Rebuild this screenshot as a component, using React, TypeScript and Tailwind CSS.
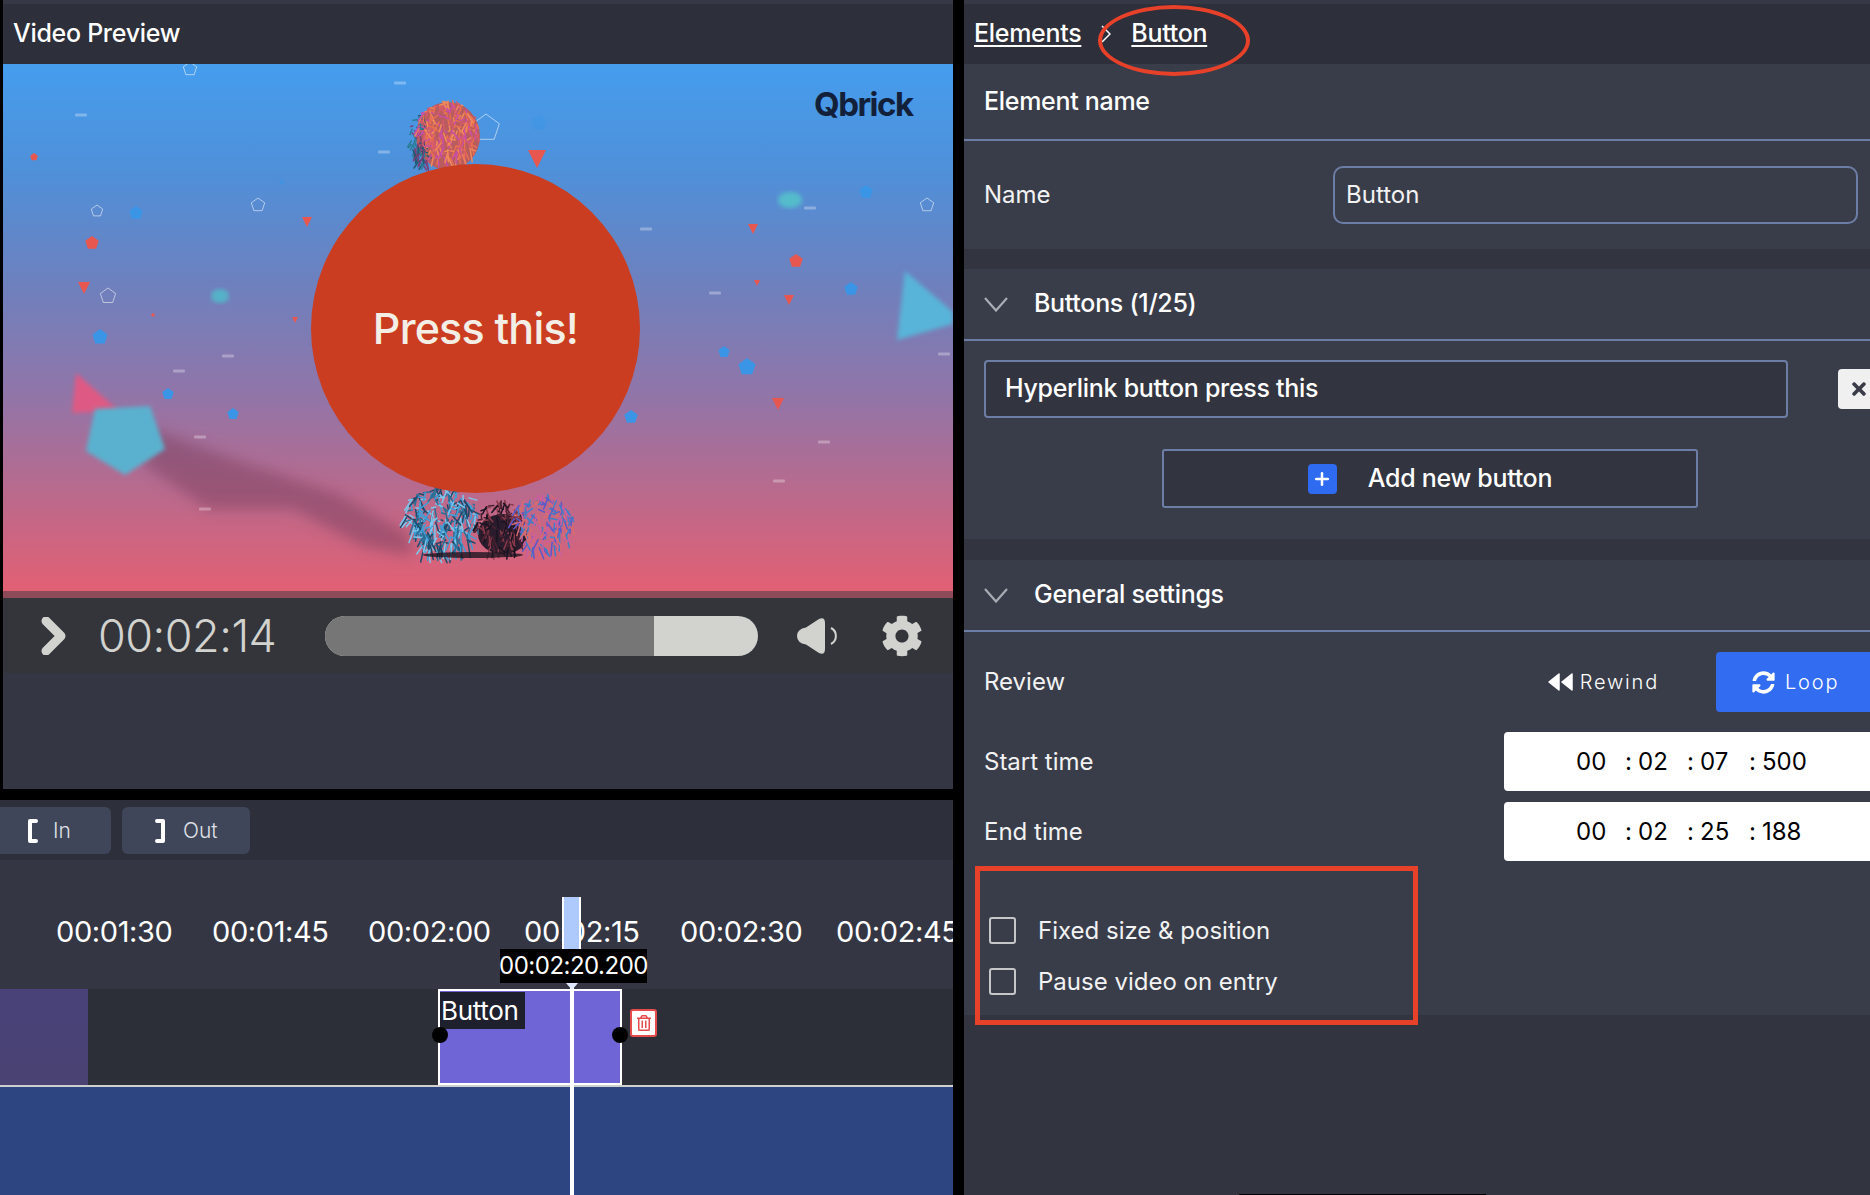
import { FaCog, FaSyncAlt, FaTimes, FaRegTrashAlt } from "react-icons/fa";
import { Plus } from "lucide-react";

const seeded = (n: number) => {
  const x = Math.sin(n * 12.9898) * 43758.5453;
  return x - Math.floor(x);
};

// hair strokes for the creature in the video frame
const Fur = ({ cx, cy, rx, ry, count, colors, len, seed }: { cx: number; cy: number; rx: number; ry: number; count: number; colors: string[]; len: number; seed: number }) => (
  <g fill="none" strokeWidth="1.5" strokeLinecap="round">
    {Array.from({ length: count }).map((_, i) => {
      const a = seeded(seed + i) * Math.PI * 2;
      const r = Math.sqrt(seeded(seed + i + 500));
      const x = cx + Math.cos(a) * r * rx;
      const y = cy + Math.sin(a) * r * ry;
      const dx = (seeded(seed + i + 900) - 0.5) * len;
      const dy = seeded(seed + i + 1300) * len;
      return <path key={i} d={`M${x.toFixed(1)} ${y.toFixed(1)}q${(dx / 2).toFixed(1)} ${(dy / 2).toFixed(1)} ${dx.toFixed(1)} ${dy.toFixed(1)}`} stroke={colors[i % colors.length]} />;
    })}
  </g>
);

const reds: number[][] = [[31, 93, 4], [534, 95, 9], [304, 158, 5], [89, 179, 7], [81, 224, 6], [750, 165, 5], [793, 197, 7], [754, 219, 3], [786, 236, 5], [150, 251, 2], [292, 256, 3], [775, 340, 6]];
const blues: number[][] = [[133, 149, 7], [97, 273, 8], [165, 330, 6], [230, 350, 6], [628, 353, 7], [721, 288, 6], [744, 303, 9], [848, 225, 7], [863, 128, 7], [279, 118, 3], [536, 59, 8]];
const dashes: number[][] = [[397, 19], [78, 51], [381, 88], [643, 165], [712, 229], [225, 292], [807, 144], [941, 290], [197, 373], [202, 445], [176, 307], [821, 378], [776, 417]];
const outlines: number[][] = [[483, 64, 14], [187, 5, 7], [255, 141, 7], [94, 147, 6], [105, 232, 8], [924, 141, 7]];

const pentagon = (x: number, y: number, r: number) =>
  [0, 1, 2, 3, 4].map((i) => {
    const a = -Math.PI / 2 + (i * 2 * Math.PI) / 5;
    return `${(x + Math.cos(a) * r).toFixed(1)},${(y + Math.sin(a) * r).toFixed(1)}`;
  }).join(" ");

const VideoArt = () => (
  <svg viewBox="0 0 950 534" className="absolute inset-0 w-full h-full">
    <defs>
      <linearGradient id="sky" x1="0" y1="0" x2="0" y2="1">
        <stop offset="0" stopColor="#459dee" />
        <stop offset="0.2" stopColor="#4f90d9" />
        <stop offset="0.42" stopColor="#6f80bd" />
        <stop offset="0.62" stopColor="#9175a8" />
        <stop offset="0.8" stopColor="#b96a8d" />
        <stop offset="1" stopColor="#e55f72" />
      </linearGradient>
      <filter id="b2"><feGaussianBlur stdDeviation="2" /></filter>
      <filter id="b7"><feGaussianBlur stdDeviation="7" /></filter>
    </defs>
    <rect width="950" height="534" fill="url(#sky)" />
    <polygon points="150,365 230,395 335,430 405,470 410,492 360,482 290,445 205,445 140,400" fill="#7a3f5f" opacity="0.5" filter="url(#b7)" />
    <polygon points="73,309 116,347 69,349" fill="#de5a84" filter="url(#b2)" />
    <polygon points="92,345 147,342 162,385 122,411 83,387" fill="#5ab1cf" filter="url(#b2)" />
    <polygon points="902,207 950,248 950,260 894,276" fill="#58b4d8" filter="url(#b2)" />
    <ellipse cx="217" cy="232" rx="9" ry="7" fill="#55b2c8" filter="url(#b2)" />
    <ellipse cx="787" cy="136" rx="12" ry="8" fill="#55bccc" filter="url(#b2)" />
    {reds.map(([x, y, r], i) => (
      <polygon key={i} points={i % 3 === 0 ? pentagon(x, y, r) : `${x - r},${y - r} ${x + r},${y - r} ${x},${y + r}`} fill="#e8574f" />
    ))}
    {blues.map(([x, y, r], i) => (
      <polygon key={i} points={pentagon(x, y, r)} fill="#3b95e6" opacity={i === 10 || i === 9 ? 0.5 : 1} />
    ))}
    {outlines.map(([x, y, r], i) => (
      <polygon key={i} points={pentagon(x, y, r)} fill="none" stroke="#ffffff" strokeOpacity="0.55" strokeWidth="1" />
    ))}
    {dashes.map(([x, y], i) => (
      <rect key={i} x={x - 6} y={y - 1.5} width="12" height="3" rx="1" fill="#ffffff" opacity="0.3" />
    ))}
    <ellipse cx="445" cy="72" rx="32" ry="34" fill="#b85c5e" />
    <Fur cx={417} cy={78} rx={9} ry={28} count={80} colors={["#1f5a70", "#2a7d96", "#7b3f78"]} len={10} seed={10} />
    <Fur cx={445} cy={66} rx={30} ry={30} count={260} colors={["#e86f4f", "#d65b6b", "#c94fa6", "#f08a5a"]} len={12} seed={20} />
    <ellipse cx="500" cy="470" rx="25" ry="20" fill="#2a1c2c" />
    <Fur cx={438} cy={455} rx={36} ry={34} count={280} colors={["#3f9fd6", "#2a6f96", "#7cc8ee", "#1d4a6a"]} len={16} seed={40} />
    <Fur cx={498} cy={462} rx={24} ry={26} count={140} colors={["#1a1422", "#4a2232", "#8a3a4a"]} len={12} seed={70} />
    <Fur cx={540} cy={458} rx={30} ry={28} count={180} colors={["#5a5ac8", "#c95fa0", "#3f7fc8", "#d86a70"]} len={14} seed={90} />
    <ellipse cx="470" cy="491" rx="50" ry="3" fill="#1e1420" opacity="0.8" />
    <rect x="0" y="527" width="950" height="7" fill="#8d4a58" />
  </svg>
);

const PlayChevron = () => (
  <svg width="26" height="38" viewBox="0 0 26 38" fill="none">
    <path d="M5 4 L20 19 L5 34" stroke="#d2d2ce" strokeWidth="9" strokeLinecap="round" strokeLinejoin="round" />
  </svg>
);

const VolumeIcon = () => (
  <svg width="44" height="36" viewBox="0 0 44 36" fill="#d2d2ce">
    <path d="M9 9.5 L22 1 Q28 -1.5 28 5 L28 31 Q28 37.5 22 35 L9 26.5 Q0 25 0 18 Q0 11 9 9.5Z" />
    <path d="M34 10 A9 9 0 0 1 34 26" fill="none" stroke="#d2d2ce" strokeWidth="2" />
  </svg>
);

const Bracket = ({ flip }: { flip?: boolean }) => (
  <svg width="11" height="24" viewBox="0 0 11 24" fill="none" className={flip ? "-scale-x-100" : ""}>
    <path d="M9 2 H3 V22 H9" stroke="#ffffff" strokeWidth="4" strokeLinecap="round" strokeLinejoin="round" />
  </svg>
);

const Down = () => (
  <svg width="24" height="15" viewBox="0 0 24 15" fill="none">
    <path d="M1 1 L12 13.5 L23 1" stroke="#a8acb3" strokeWidth="2.2" />
  </svg>
);

const RewindIcon = () => (
  <svg width="25" height="18" viewBox="0 0 25 18" fill="#ffffff">
    <path d="M11 1 V17 L1 9Z" stroke="#ffffff" strokeWidth="1.5" strokeLinejoin="round" />
    <path d="M24 1 V17 L14 9Z" stroke="#ffffff" strokeWidth="1.5" strokeLinejoin="round" />
  </svg>
);

const TimeField = ({ parts, className }: { parts: string[]; className?: string }) => (
  <div className={`h-[59px] bg-white rounded-l-[4px] flex items-center pl-[72px] text-[24px] text-black ${className ?? ""}`}>
    <span className="w-[49px]">{parts[0]}</span>
    <span className="w-[13px]">:</span>
    <span className="w-[49px]">{parts[1]}</span>
    <span className="w-[13px]">:</span>
    <span className="w-[49px]">{parts[2]}</span>
    <span className="w-[13px]">:</span>
    <span>{parts[3]}</span>
  </div>
);

const Checkbox = ({ label, className }: { label: string; className?: string }) => (
  <label className={`flex items-center h-[27px] pl-[25px] ${className ?? ""}`}>
    <span className="w-[27px] h-[27px] rounded-[3px] border-[2px] border-[#c4c6c8]" />
    <span className="ml-[22px] text-[24px] text-[#f2f2f2]">{label}</span>
  </label>
);

const rulerMarks = ["00:01:30", "00:01:45", "00:02:00", "00:02:15", "00:02:30", "00:02:45"];

export default function App() {
  return (
    <div className="relative flex w-[1870px] h-[1195px] bg-black overflow-hidden font-['Inter',sans-serif] text-white">
      {/* left column */}
      <div className="w-[953px] flex flex-col shrink-0">
        <div className="ml-[3px] h-[789px] flex flex-col bg-[#343643]">
          <div className="h-[4px] bg-[#363945]" />
          <div className="h-[60px] bg-[#2d2f3a] flex items-center pl-[10px] text-[25px] font-medium tracking-[-0.3px]">Video Preview</div>
          <div className="relative h-[534px] overflow-hidden">
            <VideoArt />
            <div className="absolute left-[811px] top-[24px] text-[#13203a] text-[33px] font-bold tracking-[-1.5px] leading-none">Qbrick</div>
            <div className="absolute left-[308px] top-[100px] w-[329px] h-[329px] rounded-full bg-[#cb3d20] flex items-center justify-center text-[43px] font-medium tracking-[-0.8px] text-[#f3eee6]">Press this!</div>
          </div>
          <div className="h-[75px] bg-[#33353b] flex items-center pl-[38px]">
            <PlayChevron />
            <div className="ml-[31px] w-[190px] text-[45px] font-light text-[#d2d2ce] tracking-[-0.5px]">00:02:14</div>
            <div className="ml-[37px] w-[433px] h-[40px] rounded-full overflow-hidden bg-[#d2d2ce]">
              <div className="h-full w-[329px] bg-[#767676]" />
            </div>
            <div className="ml-[39px]"><VolumeIcon /></div>
            <FaCog className="ml-[40px] text-[#d2d2ce]" size={42} />
          </div>
        </div>
        <div className="relative mt-[11px] flex-1 flex flex-col">
          <div className="h-[60px] bg-[#2d2f3a] flex gap-[11px] pt-[7px]">
            <div className="w-[111px] h-[47px] bg-[#40465a] rounded-r-[6px] flex items-center pl-[27px] gap-[15px] text-[21px] text-[#dfe1e6] font-light">
              <Bracket />In
            </div>
            <div className="w-[128px] h-[47px] bg-[#40465a] rounded-[6px] flex items-center pl-[33px] gap-[17px] text-[21px] text-[#dfe1e6] font-light">
              <Bracket flip />Out
            </div>
          </div>
          <div className="h-[129px] bg-[#343643] overflow-hidden flex pl-[56px] pt-[53px] text-[29px] tracking-[-0.4px] leading-[38px]">
            {rulerMarks.map((m) => (
              <span key={m} className="w-[156px] shrink-0">{m}</span>
            ))}
          </div>
          <div className="relative h-[96px] bg-[#2c2e38]">
            <div className="w-[88px] h-full bg-gradient-to-b from-[#49427a] to-[#4a4272]" />
            <div className="absolute left-[438px] top-0 w-[184px] h-[96px] bg-[#7065d6] border-[2px] border-white">
              <div className="w-[85px] h-[37px] mt-[1px] bg-[#1f202e] text-[26px] font-normal flex items-center pl-[1px] tracking-[-0.3px]">Button</div>
            </div>
            <div className="absolute left-[432px] top-[38px] w-[16px] h-[16px] rounded-full bg-black" />
            <div className="absolute left-[612px] top-[38px] w-[16px] h-[16px] rounded-full bg-black" />
            <div className="absolute left-[630px] top-[20px] w-[27px] h-[28px] rounded-[3px] bg-white border-[2px] border-[#e64b4b] flex items-center justify-center text-[#e64b4b]">
              <FaRegTrashAlt size={16} />
            </div>
          </div>
          <div className="h-[2px] bg-[#cfcfcf]" />
          <div className="flex-1 bg-[#2d4580]" />

          {/* playhead */}
          <div className="absolute left-[570px] top-[185px] bottom-0 w-[4px] bg-white" />
          <div className="absolute left-[562px] top-[97px] w-[19px] h-[52px] bg-[#aec9fb] border-x-[2px] border-white" />
          <div className="absolute left-[500px] top-[149px] w-[147px] h-[34px] bg-black flex items-center justify-center text-[24px] tracking-[-0.5px]">00:02:20.200</div>
          <svg className="absolute left-[565px] top-[183px]" width="14" height="7" viewBox="0 0 14 7"><path d="M1 0 H13 L7 7Z" fill="#dfe8fb" /></svg>
        </div>
      </div>

      {/* right column */}
      <div className="relative ml-[11px] flex-1 flex flex-col bg-[#32343f] overflow-hidden">
        <div className="h-[4px] bg-[#363945] shrink-0" />
        <div className="h-[60px] shrink-0 bg-[#2d2f3a] flex items-center pl-[10px] text-[25px] font-medium tracking-[-0.3px]">
          <span className="underline underline-offset-[3px]">Elements</span>
          <svg className="ml-[20px]" width="10" height="18" viewBox="0 0 10 18" fill="none"><path d="M1 1 L9 9 L1 17" stroke="#ffffff" strokeWidth="1.5" /></svg>
          <span className="ml-[20px] underline underline-offset-[3px]">Button</span>
        </div>

        <section className="h-[185px] shrink-0 bg-[#393d4a]">
          <div className="h-[75px] pl-[20px] flex items-center text-[25px] font-medium tracking-[-0.3px] border-b-[2px] border-[#6d7ea6] box-content">Element name</div>
          <div className="flex items-center h-[108px] pl-[20px] pr-[12px]">
            <span className="text-[24px] text-[#f2f2f2]">Name</span>
            <div className="ml-auto w-[525px] h-[58px] rounded-[10px] border-[2px] border-[#6d7ea6] flex items-center pl-[11px] text-[24px] text-[#f2f2f2]">Button</div>
          </div>
        </section>

        <section className="mt-[20px] h-[270px] shrink-0 bg-[#393d4a]">
          <div className="h-[70px] pl-[20px] flex items-center text-[25px] font-medium tracking-[-0.3px] border-b-[2px] border-[#6d7ea6] box-content">
            <Down />
            <span className="ml-[26px]">Buttons (1/25)</span>
          </div>
          <div className="flex items-center mt-[19px] pl-[20px]">
            <div className="w-[804px] h-[58px] rounded-[4px] border-[2px] border-[#6d7ea6] bg-[#32343f] flex items-center pl-[19px] text-[25px] font-medium tracking-[-0.3px]">Hyperlink button press this</div>
            <div className="ml-[50px] flex-1 h-[40px] bg-[#f0f0f0] rounded-l-[4px] flex items-center pl-[11px] text-[#3a3d48]"><FaTimes size={20} /></div>
          </div>
          <div className="mt-[31px] ml-[198px] w-[536px] h-[59px] rounded-[3px] border-[2px] border-[#6d7ea6] bg-[#32343f] flex items-center justify-center text-[25px] font-medium tracking-[-0.3px]">
            <span className="w-[29px] h-[30px] rounded-[4px] bg-[#2f6bf0] flex items-center justify-center"><Plus size={20} strokeWidth={3} /></span>
            <span className="ml-[31px]">Add new button</span>
          </div>
        </section>

        <section className="mt-[21px] h-[455px] shrink-0 bg-[#393d4a]">
          <div className="h-[70px] pl-[20px] flex items-center text-[25px] font-medium tracking-[-0.3px] border-b-[2px] border-[#6d7ea6] box-content">
            <Down />
            <span className="ml-[26px]">General settings</span>
          </div>
          <div className="flex items-center h-[60px] mt-[20px] pl-[20px]">
            <span className="text-[24px] text-[#f2f2f2]">Review</span>
            <div className="ml-auto flex items-center gap-[7px] text-[20px] tracking-[1.8px] font-light">
              <RewindIcon />Rewind
            </div>
            <div className="ml-[57px] w-[154px] h-[60px] bg-[#326cf0] rounded-l-[4px] flex items-center pl-[36px] gap-[10px] text-[20px] tracking-[1.8px] font-light">
              <FaSyncAlt size={23} />Loop
            </div>
          </div>
          <div className="flex mt-[20px] items-center pl-[20px]">
            <span className="text-[24px] text-[#f2f2f2]">Start time</span>
            <TimeField className="ml-auto w-[366px]" parts={["00", "02", "07", "500"]} />
          </div>
          <div className="flex mt-[11px] items-center pl-[20px]">
            <span className="text-[24px] text-[#f2f2f2]">End time</span>
            <TimeField className="ml-auto w-[366px]" parts={["00", "02", "25", "188"]} />
          </div>
          <Checkbox className="mt-[56px]" label="Fixed size & position" />
          <Checkbox className="mt-[24px]" label="Pause video on entry" />
        </section>

        {/* annotations drawn over the screenshot */}
        <div className="absolute left-[134px] top-[5px] w-[152px] h-[71px] rounded-[50%] border-[4px] border-[#e8412a]" />
        <div className="absolute left-[11px] top-[866px] w-[443px] h-[159px] border-[5px] border-[#e8412a]" />
        <div className="absolute left-[275px] bottom-0 w-[247px] h-[1px] bg-black" />
      </div>
    </div>
  );
}
